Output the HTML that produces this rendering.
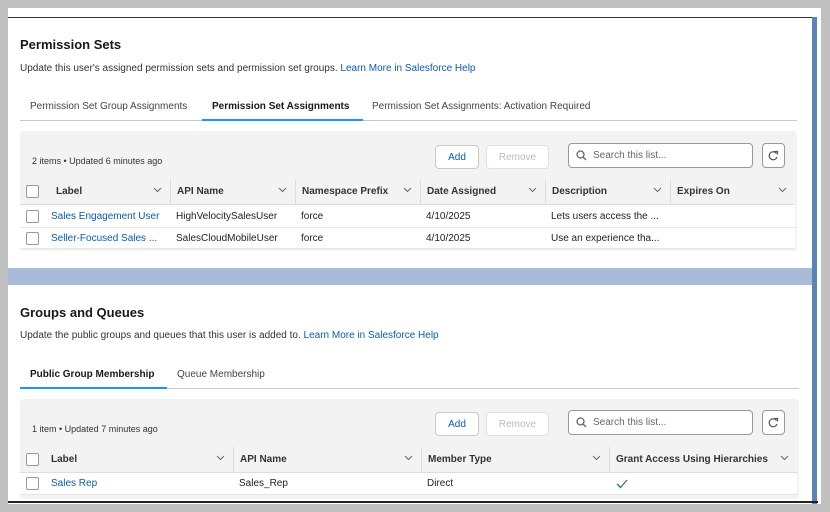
<!DOCTYPE html>
<html><head><meta charset="utf-8"><style>
*{margin:0;padding:0;box-sizing:border-box}
body{width:830px;height:512px;background:#c0c0c0;position:relative;overflow:hidden;font-family:"Liberation Sans",Arial,sans-serif;color:#181818}
.a{position:absolute}
.t{font-size:13px;font-weight:bold;color:#181818}
.d{font-size:10px;color:#333}
.l{color:#0b5cab}
.tab{font-size:10px;color:#444}
.box{background:#f3f3f3;border-radius:3px}
.btn{background:#fff;border:1px solid #c9c9c9;border-radius:4px;font-size:10px;display:flex;align-items:center;justify-content:center}
.srch{justify-content:flex-start;padding-left:24px}
.hd{background:#f3f3f3;border-bottom:1px solid #ddd;font-size:10px;font-weight:bold;color:#333}
.c{position:absolute;top:0;height:100%;padding-left:6px;display:flex;align-items:center;border-left:1px solid #ddd}
.row{background:#fff;border-bottom:1px solid #e5e5e5;font-size:10px;color:#222}
.cb{position:absolute;width:13px;height:13px;border:1px solid #999;border-radius:2px;background:#fff}
.ch{position:absolute;right:8px;top:8px}
</style></head><body>
<div class="a" style="left:8px;top:8px;width:813px;height:496px;background:#fff"></div>
<div class="a" style="left:8px;top:17px;width:806px;height:1px;background:#333"></div>
<div class="a" style="left:812px;top:17px;width:5px;height:487px;background:#5d82b5"></div>
<div class="a" style="left:8px;top:268px;width:804px;height:17px;background:#a8bcd9"></div>
<div class="a" style="left:8px;top:501px;width:810px;height:2px;background:#222"></div>
<div class="a" style="left:0;top:504px;width:830px;height:8px;background:#c0c0c0"></div>

<div class="a t" style="left:20px;top:37px">Permission Sets</div>
<div class="a d" style="left:20px;top:63px">Update this user's assigned permission sets and permission set groups. <span class="l">Learn More in Salesforce Help</span></div>
<div class="a tab" style="left:30px;top:101px">Permission Set Group Assignments</div>
<div class="a tab" style="left:212px;top:101px;font-weight:bold;color:#181818">Permission Set Assignments</div>
<div class="a tab" style="left:372px;top:101px">Permission Set Assignments: Activation Required</div>
<div class="a" style="left:20px;top:120px;width:777px;height:1px;background:#c9c9c9"></div>
<div class="a" style="left:202px;top:119px;width:161px;height:2px;background:#1b96ff"></div>

<div class="a box" style="left:20px;top:131px;width:777px;height:120px"></div>
<div class="a" style="left:32px;top:156px;font-size:9px;color:#333">2 items • Updated 6 minutes ago</div>
<div class="a btn l" style="left:435px;top:145px;width:44px;height:24px">Add</div>
<div class="a btn" style="left:486px;top:145px;width:63px;height:24px;color:#bbb;border-color:#e0e0e0">Remove</div>
<div class="a btn srch" style="left:568px;top:143px;width:185px;height:25px;color:#666;border-color:#999">Search this list...</div>
<svg class="a" style="left:576px;top:150px" width="11" height="11" viewBox="0 0 11 11"><circle cx="4.5" cy="4.5" r="3.5" fill="none" stroke="#666" stroke-width="1.3"/><path d="M7 7l3 3" stroke="#666" stroke-width="1.3"/></svg>
<div class="a btn" style="left:762px;top:143px;width:23px;height:25px;border-color:#999"></div>
<svg class="a" style="left:768px;top:150px" width="11" height="11" viewBox="0 0 11 11"><path d="M8.5 3.5A4 4 0 1 0 9 7" fill="none" stroke="#555" stroke-width="1.2"/><path d="M6.5 1.5h3v3" fill="none" stroke="#555" stroke-width="1.2"/></svg>

<div class="a hd" style="left:20px;top:179px;width:775px;height:26px">
 <div class="cb" style="left:6px;top:6px"></div>
 <div class="c" style="left:30px;width:120px;border-left:none">Label<svg class="ch" width="9" height="6"><path d="M1 1l3.5 3.5L8 1" fill="none" stroke="#666"/></svg></div>
 <div class="c" style="left:150px;width:125px">API Name<svg class="ch" width="9" height="6"><path d="M1 1l3.5 3.5L8 1" fill="none" stroke="#666"/></svg></div>
 <div class="c" style="left:275px;width:125px">Namespace Prefix<svg class="ch" width="9" height="6"><path d="M1 1l3.5 3.5L8 1" fill="none" stroke="#666"/></svg></div>
 <div class="c" style="left:400px;width:125px">Date Assigned<svg class="ch" width="9" height="6"><path d="M1 1l3.5 3.5L8 1" fill="none" stroke="#666"/></svg></div>
 <div class="c" style="left:525px;width:125px">Description<svg class="ch" width="9" height="6"><path d="M1 1l3.5 3.5L8 1" fill="none" stroke="#666"/></svg></div>
 <div class="c" style="left:650px;width:125px">Expires On<svg class="ch" width="9" height="6"><path d="M1 1l3.5 3.5L8 1" fill="none" stroke="#666"/></svg></div>
</div>
<div class="a row" style="left:20px;top:205px;width:775px;height:23px">
 <div class="cb" style="left:6px;top:5px"></div>
 <div class="c l" style="left:25px;border:none">Sales Engagement User</div>
 <div class="c" style="left:150px;border:none">HighVelocitySalesUser</div>
 <div class="c" style="left:275px;border:none">force</div>
 <div class="c" style="left:400px;border:none">4/10/2025</div>
 <div class="c" style="left:525px;border:none">Lets users access the ...</div>
</div>
<div class="a row" style="left:20px;top:228px;width:775px;height:21px">
 <div class="cb" style="left:6px;top:4px"></div>
 <div class="c l" style="left:25px;border:none">Seller-Focused Sales ...</div>
 <div class="c" style="left:150px;border:none">SalesCloudMobileUser</div>
 <div class="c" style="left:275px;border:none">force</div>
 <div class="c" style="left:400px;border:none">4/10/2025</div>
 <div class="c" style="left:525px;border:none">Use an experience tha...</div>
</div>

<div class="a t" style="left:20px;top:305px">Groups and Queues</div>
<div class="a d" style="left:20px;top:330px">Update the public groups and queues that this user is added to. <span class="l">Learn More in Salesforce Help</span></div>
<div class="a tab" style="left:30px;top:369px;font-weight:bold;color:#181818">Public Group Membership</div>
<div class="a tab" style="left:177px;top:369px">Queue Membership</div>
<div class="a" style="left:20px;top:388px;width:779px;height:1px;background:#c9c9c9"></div>
<div class="a" style="left:20px;top:387px;width:147px;height:2px;background:#1b96ff"></div>

<div class="a box" style="left:20px;top:399px;width:779px;height:100px"></div>
<div class="a" style="left:32px;top:424px;font-size:9px;color:#333">1 item • Updated 7 minutes ago</div>
<div class="a btn l" style="left:435px;top:412px;width:44px;height:24px">Add</div>
<div class="a btn" style="left:486px;top:412px;width:63px;height:24px;color:#bbb;border-color:#e0e0e0">Remove</div>
<div class="a btn srch" style="left:568px;top:410px;width:185px;height:25px;color:#666;border-color:#999">Search this list...</div>
<svg class="a" style="left:576px;top:417px" width="11" height="11" viewBox="0 0 11 11"><circle cx="4.5" cy="4.5" r="3.5" fill="none" stroke="#666" stroke-width="1.3"/><path d="M7 7l3 3" stroke="#666" stroke-width="1.3"/></svg>
<div class="a btn" style="left:762px;top:410px;width:23px;height:25px;border-color:#999"></div>
<svg class="a" style="left:768px;top:417px" width="11" height="11" viewBox="0 0 11 11"><path d="M8.5 3.5A4 4 0 1 0 9 7" fill="none" stroke="#555" stroke-width="1.2"/><path d="M6.5 1.5h3v3" fill="none" stroke="#555" stroke-width="1.2"/></svg>

<div class="a hd" style="left:20px;top:447px;width:777px;height:26px">
 <div class="cb" style="left:6px;top:6px"></div>
 <div class="c" style="left:27px;width:186px;border-left:none;padding-left:4px">Label<svg class="ch" width="9" height="6"><path d="M1 1l3.5 3.5L8 1" fill="none" stroke="#666"/></svg></div>
 <div class="c" style="left:213px;width:188px">API Name<svg class="ch" width="9" height="6"><path d="M1 1l3.5 3.5L8 1" fill="none" stroke="#666"/></svg></div>
 <div class="c" style="left:401px;width:188px">Member Type<svg class="ch" width="9" height="6"><path d="M1 1l3.5 3.5L8 1" fill="none" stroke="#666"/></svg></div>
 <div class="c" style="left:589px;width:188px">Grant Access Using Hierarchies<svg class="ch" width="9" height="6"><path d="M1 1l3.5 3.5L8 1" fill="none" stroke="#666"/></svg></div>
</div>
<div class="a row" style="left:20px;top:473px;width:777px;height:22px">
 <div class="cb" style="left:6px;top:4px"></div>
 <div class="c l" style="left:25px;border:none">Sales Rep</div>
 <div class="c" style="left:213px;border:none">Sales_Rep</div>
 <div class="c" style="left:401px;border:none">Direct</div>
 <svg class="a" style="left:596px;top:6px" width="12" height="10" viewBox="0 0 12 10"><path d="M1 5l3.5 3.5L11 1" fill="none" stroke="#2e844a" stroke-width="1.3"/></svg>
</div>
</body></html>
